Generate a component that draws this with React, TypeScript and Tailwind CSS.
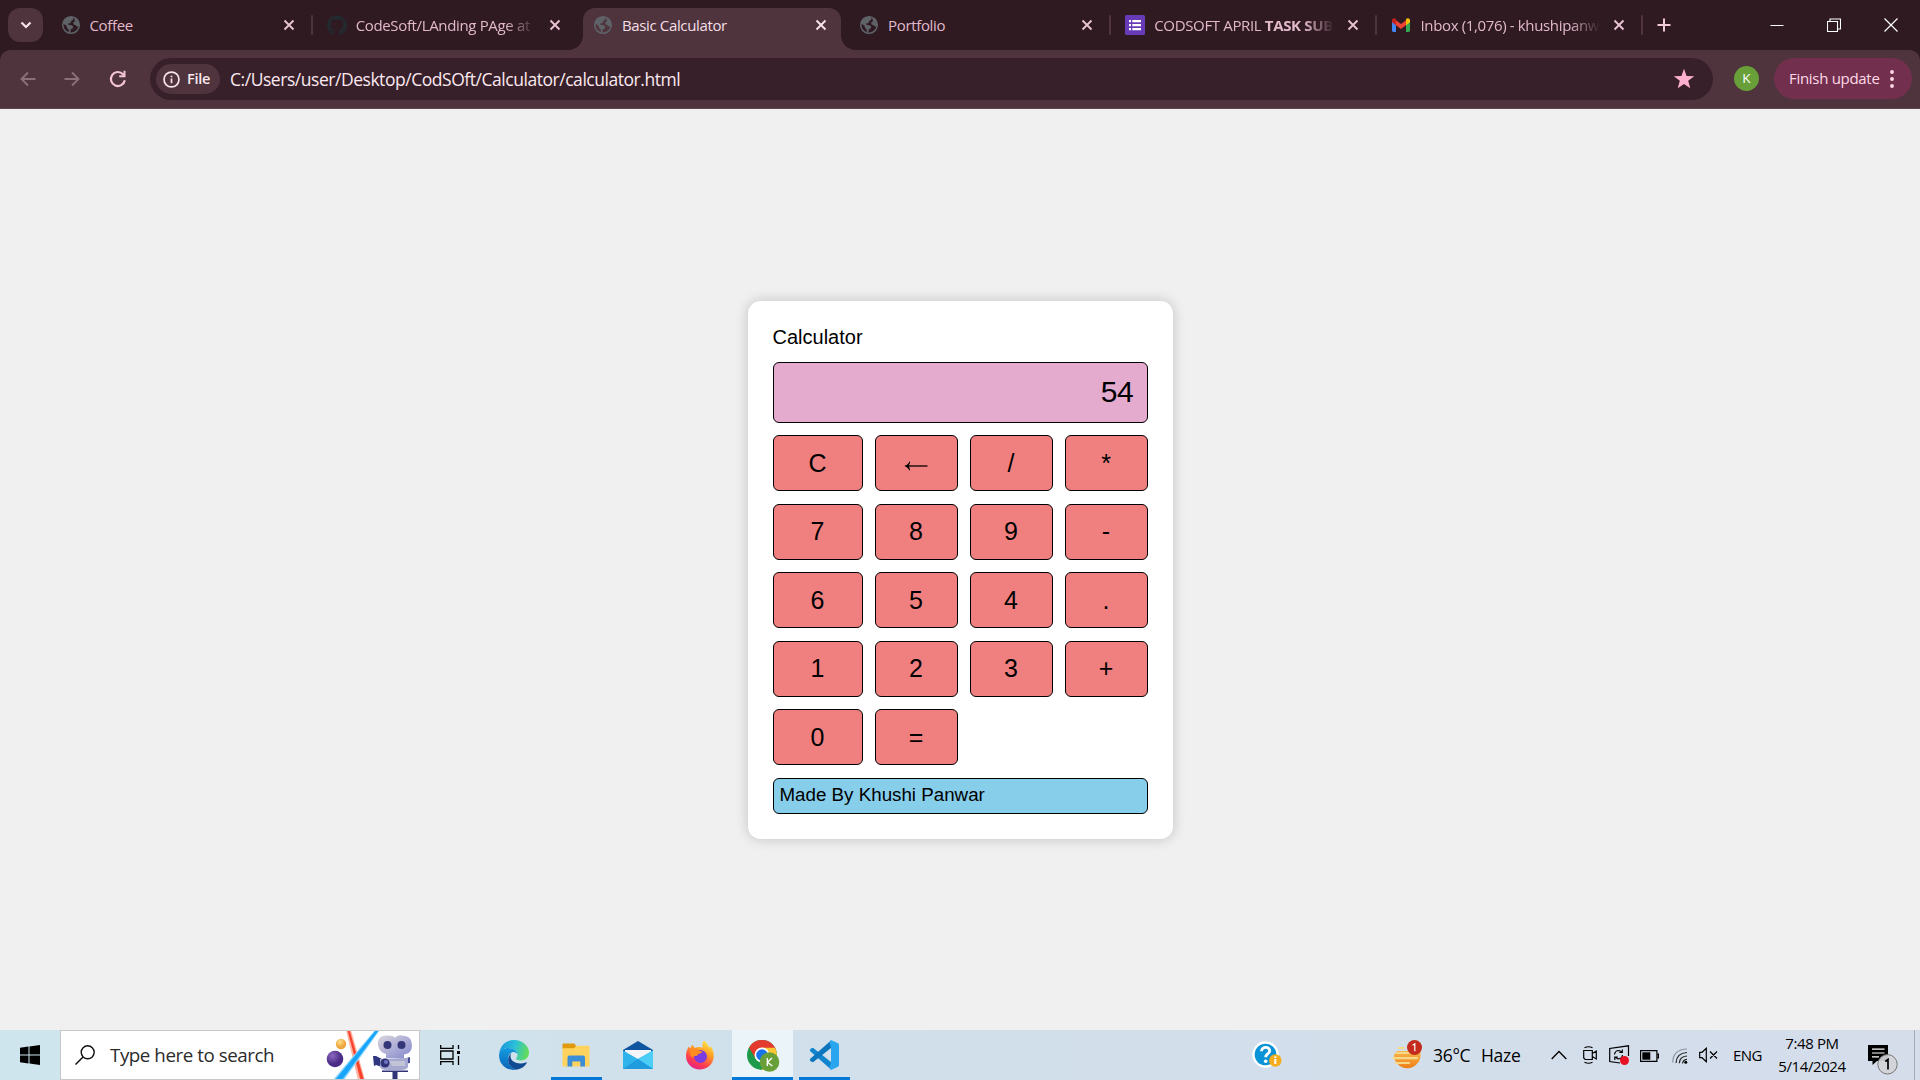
import type { ReactNode } from "react";
import { SiGithub } from "react-icons/si";

const ui = "font-['Open_Sans','Noto_Sans',sans-serif]";

function Globe() {
  return (
    <svg viewBox="0 0 20 20" className="h-[20px] w-[20px]">
      <circle cx="10" cy="10" r="8.3" fill="none" stroke="#5f6368" strokeWidth="1.5" />
      <path
        d="M2 8.5C3 4.5 6 1.7 10.5 1.8L12.5 2.6 12.3 4.6 10 6.2 9.6 8 7.2 8.4 7.6 9.9 10.6 10.2 12.2 11.6 11.6 13.4 9.8 14.2 9.3 17.6 7.9 17.9 7.6 14.6 5.8 12.4 5.6 10.8Z"
        fill="#5f6368"
      />
      <path d="M13.5 2.6C16.8 4 18.6 7.2 18.2 11L16.2 11.8 14.8 10.2 12.6 9.4 12.2 7.6 13.8 6.6Z" fill="#5f6368" />
    </svg>
  );
}

function FormsIcon() {
  return (
    <svg viewBox="0 0 20 20" className="h-5 w-5">
      <rect width="20" height="20" rx="1.5" fill="#673ab7" />
      <path d="M4 5h2v2.2H4zM7.3 5H16v2.2H7.3zM4 9h2v2.2H4zM7.3 9H16v2.2H7.3zM4 13h2v2.2H4zM7.3 13H16v2.2H7.3z" fill="#fff" />
    </svg>
  );
}

function GmailIcon() {
  return (
    <svg viewBox="0 0 20 20" className="h-5 w-5">
      <path d="M1 5v10.600Q1 17 2.300 17H5V8Z" fill="#4285f4" />
      <path d="M19 5v10.600Q19 17 17.700 17H15V8Z" fill="#34a853" />
      <path d="M5 5.200 10 9l5-3.800v5L10 14 5 10.200Z" fill="#ea4335" />
      <path d="M1 5.500C1 3.300 3.300 2.700 5 4v6.200L1 7.200Z" fill="#c5221f" />
      <path d="M19 5.500C19 3.300 16.700 2.700 15 4v6.200l4-3Z" fill="#fbbc04" />
    </svg>
  );
}

function CloseX({ color }: { color: string }) {
  return (
    <svg viewBox="0 0 12 12" className="h-3 w-3">
      <path d="M1.500 1.500 10.500 10.500M10.500 1.500 1.500 10.500" stroke={color} strokeWidth="1.9" fill="none" />
    </svg>
  );
}

type TabProps = {
  icon: ReactNode;
  title: ReactNode;
  active?: boolean;
  divider?: boolean;
  fade?: boolean;
};

function Tab({ icon, title, active, divider, fade }: TabProps) {
  return (
    <div className="flex h-[50px] w-[266.200px] shrink-0 items-end">
      <div
        className={
          active
            ? "relative flex h-[42px] w-[258px] items-center rounded-t-[12px] bg-[#4f343e] pb-[8px] text-[#f5dfe6]"
            : "relative flex h-[42px] w-[258px] items-center pb-[8px] text-[#e2b9c9]"
        }
      >
        {active && (
          <>
            <span className="absolute bottom-0 -left-[14px] h-[14px] w-[14px] bg-[radial-gradient(circle_at_0_0,transparent_13.500px,#4f343e_14px)]" />
            <span className="absolute -right-[14px] bottom-0 h-[14px] w-[14px] bg-[radial-gradient(circle_at_100%_0,transparent_13.500px,#4f343e_14px)]" />
          </>
        )}
        <span className="ml-[10px] flex w-[20px] shrink-0 justify-center">{icon}</span>
        <span
          className={
            fade
              ? "ml-[9px] w-[180px] shrink-0 text-[15px] leading-5 tracking-[-0.35px] whitespace-nowrap [mask-image:linear-gradient(to_right,#000_150px,transparent_180px)]"
              : "ml-[9px] w-[180px] shrink-0 text-[15px] leading-5 tracking-[-0.35px] whitespace-nowrap"
          }
        >
          {title}
        </span>
        <span className="ml-[13px]">
          <CloseX color={active ? "#f8e4ea" : "#e8c3d1"} />
        </span>
      </div>
      {divider && <span className="mb-[15px] ml-[2px] h-[20px] w-[2px] rounded bg-[#4f343e]" />}
    </div>
  );
}

function TabStrip() {
  return (
    <div className="flex h-[50px] bg-[#2f1a22]">
      <div className="mt-[8px] ml-[8px] flex h-[34px] w-[35px] shrink-0 items-center justify-center rounded-[12px] bg-[#4f343e]">
        <svg viewBox="0 0 12 8" className="h-[8px] w-[12px]">
          <path d="M1.500 1.500 6 6 10.500 1.500" fill="none" stroke="#f8e4ea" strokeWidth="2.200" />
        </svg>
      </div>
      <div className="ml-[7.500px] flex">
        <Tab icon={<Globe />} title="Coffee" divider />
        <Tab icon={<SiGithub size={20} color="#24292f" />} title="CodeSoft/LAnding PAge at" fade />
        <Tab icon={<Globe />} title="Basic Calculator" active />
        <Tab icon={<Globe />} title="Portfolio" divider />
        <Tab icon={<FormsIcon />} title={<>CODSOFT APRIL <b>TASK SUB</b></>} fade divider />
        <Tab icon={<GmailIcon />} title="Inbox (1,076) - khushipanw" fade divider />
      </div>
      <svg viewBox="0 0 14 14" className="mt-[18px] ml-[9px] h-[14px] w-[14px]">
        <path d="M7 .5v13M.5 7h13" stroke="#f0cad8" strokeWidth="2" />
      </svg>
      <div className="mt-[17px] mr-[22px] ml-auto flex h-[15px] items-center gap-[43px]">
        <svg viewBox="0 0 14 14" className="h-[14px] w-[14px]">
          <path d="M.5 7.500h13" stroke="#fff" />
        </svg>
        <svg viewBox="0 0 14 14" className="h-[14px] w-[14px]">
          <path d="M.5 3.500h10v10H.5zM3 3.500V1h10.500v10H11" fill="none" stroke="#fff" strokeWidth="1.100" />
        </svg>
        <svg viewBox="0 0 14 14" className="h-[14px] w-[14px]">
          <path d="M.5.5l13 13M13.500.5l-13 13" stroke="#fff" strokeWidth="1.200" />
        </svg>
      </div>
    </div>
  );
}

function Toolbar() {
  return (
    <div className="bg-[#2f1a22]">
      <div className="flex h-[59px] items-start rounded-t-[10px] border-b border-[#5e4650] bg-[#4f343e] pt-[8px]">
        <div className="flex h-[42px] w-[150px] items-center pl-[20px]">
          <svg viewBox="0 0 16 16" className="h-4 w-4">
            <path d="M15.500 8H1.500M8 1.500 1.500 8 8 14.500" fill="none" stroke="#8b6f79" strokeWidth="1.900" />
          </svg>
          <svg viewBox="0 0 16 16" className="ml-[28px] h-4 w-4">
            <path d="M.5 8h14M8 1.500 14.500 8 8 14.500" fill="none" stroke="#8b6f79" strokeWidth="1.900" />
          </svg>
          <svg viewBox="0 0 18 18" className="ml-[29px] h-[18px] w-[18px]">
            <path d="M15.800 10.200A7 7 0 1 1 14 4.200L15.500 5.800" fill="none" stroke="#f3c5d5" strokeWidth="2.200" />
            <path d="M16.500.8V7.200H10.200V5.200h4.300V.8Z" fill="#f3c5d5" />
          </svg>
        </div>
        <div className="flex h-[42px] w-[1563px] items-center rounded-full bg-[#38202a] pl-[6px]">
          <div className="flex h-[30px] w-[64px] items-center rounded-full bg-[#4f343e] pl-[7px]">
            <svg viewBox="0 0 18 18" className="h-[17px] w-[17px]">
              <circle cx="9" cy="9" r="7.900" fill="none" stroke="#f8e4ea" strokeWidth="1.800" />
              <path d="M8.100 7.900h1.800V13H8.100zM8.100 4.900h1.800v1.800H8.100z" fill="#f8e4ea" />
            </svg>
            <span className="ml-[7px] text-[14.500px] font-semibold tracking-[-0.300px] text-[#fbe9ef]">File</span>
          </div>
          <span className="ml-[10px] text-[17.500px] tracking-[-0.460px] whitespace-nowrap text-[#fbe9ef]">
            C:/Users/user/Desktop/CodSOft/Calculator/calculator.html
          </span>
          <svg viewBox="0 0 20 20" className="mr-[18px] ml-auto h-[22px] w-[22px]">
            <path d="M10 .6 12.300 7.300 19.300 7.400 13.800 11.700 15.700 18.500 10 14.500 4.300 18.500 6.200 11.700.7 7.400 7.700 7.300Z" fill="#ffb0d1" />
          </svg>
        </div>
        <div className="mt-[8px] ml-[21px] flex h-[25px] w-[25px] items-center justify-center rounded-full bg-[#689f38] text-[13.500px] text-white">K</div>
        <div className="ml-[15px] flex h-[41px] w-[138px] items-center rounded-full bg-[#72304e] pl-[15px] text-[#ffd9e6]">
          <span className="w-[101px] text-[15px] tracking-[-0.300px] whitespace-nowrap">Finish update</span>
          <svg viewBox="0 0 4 18" className="h-[18px] w-[4px]">
            <circle cx="2" cy="2" r="1.900" fill="#ffd9e6" />
            <circle cx="2" cy="9" r="1.900" fill="#ffd9e6" />
            <circle cx="2" cy="16" r="1.900" fill="#ffd9e6" />
          </svg>
        </div>
      </div>
    </div>
  );
}

const keys = ["C", "←", "/", "*", "7", "8", "9", "-", "6", "5", "4", ".", "1", "2", "3", "+", "0", "="];

function Calculator() {
  return (
    <div className="h-[538px] w-[425px] rounded-[12.500px] bg-white p-[25px] font-['Liberation_Sans',Arial,sans-serif] text-black shadow-[0_0_12.500px_rgba(0,0,0,0.2)]">
      <div className="h-[36px] text-[20px] leading-[22px]">Calculator</div>
      <div className="flex h-[61px] items-center justify-end rounded-[6px] border border-black bg-[#e4abcf] pr-[13px] pb-[3px] text-[30px] tracking-[-0.300px]">54</div>
      <div className="mt-[12px] grid grid-cols-[90px_83px_83px_83px] gap-x-[12px] gap-y-[12.500px]">
        {keys.map((k) => (
          <button key={k} className="flex h-[56px] items-center justify-center rounded-[6px] border border-black bg-[#f08080] text-[25px] leading-none">
            {k === "←" ? (
              <svg viewBox="0 0 24 12" className="mt-[6px] h-[12px] w-[24px]">
                <path d="M1.500 6H23.500" stroke="#000" strokeWidth="1.300" />
                <path d="M.5 6C3 5 4.500 3.500 5.500 1.500L6.200 1.900 4.800 6 6.200 10.100 5.500 10.500C4.500 8.500 3 7 .5 6Z" fill="#000" />
              </svg>
            ) : (
              k
            )}
          </button>
        ))}
      </div>
      <div className="mt-[13px] flex h-[36px] items-center rounded-[6px] border border-black bg-[#87ceeb] pb-px pl-[6px] text-[18.750px]">
        Made By Khushi Panwar
      </div>
    </div>
  );
}

function SearchArt() {
  return (
    <svg viewBox="0 0 90 48" className="h-[48px] w-[90px]">
      <defs>
        <linearGradient id="cam" x1="0" y1="0" x2="1" y2="1">
          <stop offset="0" stopColor="#dcd6dd" />
          <stop offset="1" stopColor="#8388cf" />
        </linearGradient>
        <radialGradient id="planet" cx=".35" cy=".3">
          <stop offset="0" stopColor="#8d69bf" />
          <stop offset="1" stopColor="#4a2c86" />
        </radialGradient>
        <radialGradient id="moon" cx=".4" cy=".3">
          <stop offset="0" stopColor="#ffe18c" />
          <stop offset="1" stopColor="#eda53e" />
        </radialGradient>
      </defs>
      <circle cx="16" cy="13" r="5.200" fill="url(#moon)" />
      <circle cx="10" cy="28" r="8.300" fill="url(#planet)" />
      <path d="M21 -1h5L40 49H33Z" fill="#ffb0a0" />
      <path d="M22.500 -1h2L39 49H35.500Z" fill="#f8432c" />
      <path d="M8 49 50 -1h5L19 49Z" fill="#8bd6fd" />
      <path d="M10 49 51 -1h3L17 49Z" fill="#16a5fa" />
      <path d="M48 25 51 25 57 28V36L51 34 49 35Z" fill="#30367f" />
      <path d="M78 28 85 26V32L78 33Z" fill="#454b99" />
      <path d="M53 14C52 6 58 4 63 4.500q5 0 7 2 3-3 7-2 10 0 10 10 0 8-8 9V27H61V23Q54 21 53 14Z" fill="url(#cam)" />
      <path d="M55 28 79 27H83V36Q82 39 76 39H62Q55 39 55 35Z" fill="#a5a8cf" />
      <path d="M64 30H80V35H67Z" fill="#c3c3d8" />
      <circle cx="62.500" cy="14" r="4" fill="#343678" />
      <circle cx="76.500" cy="14" r="4" fill="#343678" />
      <circle cx="60" cy="32" r="4.500" fill="#303277" />
      <circle cx="61" cy="31" r="2" fill="#7077bd" />
      <path d="M57 39.500H83V41H72.500V49H67.500V41H57Z" fill="#303277" />
    </svg>
  );
}

function EdgeIcon() {
  return (
    <svg viewBox="0 0 30 30" className="h-[30px] w-[30px]">
      <defs>
        <linearGradient id="edgeTop" x1="0" y1=".3" x2="1" y2=".5">
          <stop offset="0" stopColor="#1a94da" />
          <stop offset=".5" stopColor="#2bc0da" />
          <stop offset="1" stopColor="#65de55" />
        </linearGradient>
        <linearGradient id="edgeLow" x1="0" y1="0" x2="0" y2="1">
          <stop offset="0" stopColor="#139be0" />
          <stop offset="1" stopColor="#0b64b8" />
        </linearGradient>
      </defs>
      <path d="M.3 13.500C1 5.500 7.300 0 15 0c8.500 0 15 6 15 12.500 0 5-3.800 8-8 8-3.500 0-5.400-1.200-5-2.200 1-1 1.500-2 1.500-3.400C18.500 10.500 13 8 9 8 5 8 2 10 .3 13.500Z" fill="url(#edgeTop)" />
      <path d="M.1 14.500C1 10 5 8 9 8c5 0 9.500 3 9.500 6.800-.5-2-2.500-3-4.500-2.800C10.500 13 8.500 16 9 20c.5 4.500 3.500 8.500 8 9.800C8 31-.5 24.500.1 14.500Z" fill="url(#edgeLow)" />
      <path d="M12.500 12.700C7 17 8 26.500 17 29.800c4.500-.5 8.500-3 10.600-6.600.4-.7-.1-1.100-.8-.8C20 25 11 22.500 11.500 15.500q.2-1.600 1-2.800Z" fill="#104a93" />
    </svg>
  );
}

function ExplorerIcon() {
  return (
    <svg viewBox="0 0 28 24" className="h-[24px] w-[28px]">
      <path d="M.5 1.500Q.5.500 1.500.500H12.500L14 3V6H.5Z" fill="#e09a0b" />
      <path d="M.5 5.200H12L14.500 2.700H27.500V22.500Q27.500 23.500 26.500 23.500H.5Z" fill="#ffd35e" />
      <path d="M5.500 23.500V14.500Q5.500 12.500 7.500 12.500H21Q23 12.500 23 14.500V23.500H18.300V18.500H10.300V23.500Z" fill="#3c8ed8" />
    </svg>
  );
}

function MailIcon() {
  return (
    <svg viewBox="0 0 30 30" className="h-[30px] w-[30px]">
      <path d="M0 10 15 1 30 10V19H0Z" fill="#0f559f" />
      <path d="M2 10H28V20H2Z" fill="#f3f5fa" />
      <path d="M0 10.500 15 19 30 10.500V29H0Z" fill="#2eb4ea" />
      <path d="M15 19 30 10.500V29Z" fill="#4ccdf5" />
      <path d="M0 29 15 19 30 29Z" fill="#1f9bde" />
    </svg>
  );
}

function FirefoxIcon() {
  return (
    <svg viewBox="0 0 30 30" className="h-[30px] w-[30px]">
      <defs>
        <linearGradient id="fox" x1=".8" y1="0" x2=".3" y2="1">
          <stop offset="0" stopColor="#fff04a" />
          <stop offset=".4" stopColor="#ff9a26" />
          <stop offset=".75" stopColor="#ff3d4e" />
          <stop offset="1" stopColor="#e01e8c" />
        </linearGradient>
      </defs>
      <path d="M19 .5C22 3 23 5 24 7.500L26 6.500C29 11 29.500 16 28 20.500 26 26 21 29.500 15 29.500 7 29.500 1 23.500 1 16 1 12 2 9 4 6.500L5.500 8.500 7 4.500 10 8C13 6.500 16 7 17.500 8 17 5 17.500 2.500 19 .5Z" fill="url(#fox)" />
      <circle cx="15.500" cy="16.500" r="6.500" fill="#7a3be0" />
      <path d="M5 10C8 8 12 8 14 10.500L17.500 11.500C16.500 13.500 13.500 13.500 13 14.500 12 17 8 15 7.500 18 5.500 16 4.500 13 5 10Z" fill="#ff8c1e" />
    </svg>
  );
}

function ChromeIcon() {
  return (
    <svg viewBox="0 0 34 34" className="ml-[2px] h-[34px] w-[34px]">
      <circle cx="15" cy="15" r="15" fill="#1e9a4b" />
      <path d="M2 7.500A15 15 0 0 1 28 7.500L29 10H15L8.700 18.800Z" fill="#e33b2e" />
      <path d="M28 7.700A15 15 0 0 1 14.500 30L21.500 18.500 15 7.700Z" fill="#fcc934" />
      <circle cx="15" cy="15" r="7.500" fill="#fff" />
      <circle cx="15" cy="15" r="5.800" fill="#1a73e8" />
      <circle cx="22.500" cy="22" r="9.800" fill="#689f38" />
      <path d="M20.300 18v8M25 18l-4.500 4.300L25.300 26" fill="none" stroke="#fff" strokeWidth="1.300" />
    </svg>
  );
}

function CodeIcon() {
  return (
    <svg viewBox="0 0 30 30" className="h-[30px] w-[30px]">
      <path d="M2 8.500 4 7.800 22 22V29.500L1 11Q.2 9.700 2 8.500Z" fill="#1085cd" />
      <path d="M2 21.500 4 22.300 22 8V.5L1 19Q.2 20.300 2 21.500Z" fill="#0b76bd" />
      <path d="M22 0 29 3.200Q30 3.700 30 5V25Q30 26.300 29 26.800L22 30 20.500 28 22 22V8L20.500 2Z" fill="#2aa6f0" />
    </svg>
  );
}

function HelpIcon() {
  return (
    <svg viewBox="0 0 30 30" className="h-[30px] w-[30px]">
      <circle cx="13.500" cy="14.500" r="13.200" fill="#fff" />
      <circle cx="13.500" cy="14.500" r="10.800" fill="#0a93d6" />
      <path d="M9.500 11.300C9.700 6 18 6.200 17.700 11 17.500 13.800 13.700 13.700 13.700 17.300" fill="none" stroke="#fff" strokeWidth="2.900" />
      <circle cx="13.700" cy="21.300" r="1.800" fill="#fff" />
      <circle cx="23.300" cy="20.500" r="6.200" fill="#f5ad1d" />
      <path d="M22.300 19h2v5h-2zM22.300 16.300h2v1.800h-2z" fill="#fff" />
    </svg>
  );
}

function HazeIcon() {
  return (
    <svg viewBox="0 0 30 30" className="h-[30px] w-[30px]">
      <defs>
        <linearGradient id="sun" x1="0" y1="0" x2="0" y2="1">
          <stop offset="0" stopColor="#f8b84a" />
          <stop offset="1" stopColor="#ee7e16" />
        </linearGradient>
      </defs>
      <path d="M2 15a13 13 0 0 0 26.500 0V11H5Z" fill="url(#sun)" />
      <path d="M6.500 8H12M5 13H18M1.500 18.200H25M4 23H17" stroke="#f6d88a" strokeWidth="2.200" strokeLinecap="round" />
      <circle cx="22.500" cy="7.500" r="7.500" fill="#c42b1c" />
      <path d="M20.600 5.300 22.800 3.800V11.200" fill="none" stroke="#fff" strokeWidth="1.200" />
    </svg>
  );
}

function AppCell({ children, className }: { children: ReactNode; className: string }) {
  return <div className={`flex h-[50px] shrink-0 items-center justify-center ${className}`}>{children}</div>;
}

function Taskbar() {
  return (
    <div className="flex h-[50px] bg-linear-to-r from-[#cfe5ed] via-[#d1dfeb] to-[#d5ddeb] text-black">
      <AppCell className="w-[60px]">
        <svg viewBox="0 0 20 20" className="h-5 w-5">
          <path d="M0 2.800 8.500 1.600V9.500H0ZM9.500 1.500 20 0V9.500H9.500ZM0 10.500H8.500V18.400L0 17.200ZM9.500 10.500H20V20L9.500 18.500Z" />
        </svg>
      </AppCell>
      <div className="flex h-[50px] w-[360px] shrink-0 items-center border border-[#c8c8c8] bg-white">
        <svg viewBox="0 0 20 20" className="ml-[14px] h-5 w-5">
          <circle cx="12.700" cy="7.300" r="6.500" fill="none" stroke="#111" strokeWidth="1.400" />
          <path d="M8 12 .5 19.500" stroke="#111" strokeWidth="1.500" />
        </svg>
        <span className="ml-[15px] w-[154px] text-[18.750px] tracking-[-0.450px] whitespace-nowrap text-[#2b2b2b]">Type here to search</span>
        <div className="ml-[61px]">
          <SearchArt />
        </div>
      </div>
      <AppCell className="w-[60px]">
        <svg viewBox="0 0 20 20" className="h-5 w-5">
          <path d="M.7 0V3.300H13V0M.7 20V16.700H13V20M.7 6H13V14H.7ZM18.500 0V4M18.500 11V20" fill="none" stroke="#000" strokeWidth="1.300" />
          <path d="M17 6h3v3h-3z" />
        </svg>
      </AppCell>
      <AppCell className="ml-[4px] w-[60px]"><EdgeIcon /></AppCell>
      <div className="ml-[7px] flex h-[50px] w-[51px] flex-col items-center justify-between pt-[13px]">
        <div className="-ml-[2px]"><ExplorerIcon /></div>
        <div className="h-[3px] w-full bg-[#0078d7]" />
      </div>
      <AppCell className="ml-[6px] w-[60px]"><MailIcon /></AppCell>
      <AppCell className="ml-[2px] w-[60px]"><FirefoxIcon /></AppCell>
      <div className="ml-[2px] flex h-[50px] w-[61px] flex-col items-center justify-between bg-[#ebf4f8] pt-[10px]">
        <ChromeIcon />
        <div className="h-[3px] w-full bg-[#0078d7]" />
      </div>
      <div className="ml-[6px] flex h-[50px] w-[51px] flex-col items-center justify-between pt-[10px]">
        <div className="-ml-[2px]"><CodeIcon /></div>
        <div className="h-[3px] w-full bg-[#0078d7]" />
      </div>
      <AppCell className="ml-[402px] w-[30px]"><HelpIcon /></AppCell>
      <AppCell className="ml-[110px] w-[30px]"><HazeIcon /></AppCell>
      <span className="ml-[11px] w-[48px] shrink-0 self-center text-[17.500px] tracking-[-0.300px] whitespace-nowrap">36°C</span>
      <span className="w-[70px] shrink-0 self-center text-[17.500px] tracking-[-0.300px]">Haze</span>
      <svg viewBox="0 0 16 10" className="h-[10px] w-[16px] shrink-0 self-center">
        <path d="M.7 9 8 1.500 15.300 9" fill="none" stroke="#000" strokeWidth="1.300" />
      </svg>
      <svg viewBox="0 0 14 18" className="ml-[16px] h-[18px] w-[14px] shrink-0 self-center">
        <path d="M.7 4.500H9.300V13.500H2.200L.7 12ZM9.300 7.500 13.300 5V13L9.300 10.500M1.500 1.800Q5.500 -.3 9.500 1.800M1.500 16.200Q5.500 18.300 9.500 16.200" fill="none" stroke="#000" strokeWidth="1.200" />
      </svg>
      <svg viewBox="0 0 21 20" className="ml-[12px] h-[20px] w-[21px] shrink-0 self-center">
        <path d="M11 18 .7 16.500V3.500L19.500.8V11" fill="none" stroke="#000" strokeWidth="1.200" />
        <path d="M5.500 9.500Q6 5.500 10 5.500L13 7M13.300 4.500V7.500H10.300M13.500 10Q13 14 9 13.800L6.300 12.300M5.800 15V12H8.800" fill="none" stroke="#000" strokeWidth="1.200" />
        <circle cx="15.500" cy="15.500" r="4.500" fill="#e81123" />
      </svg>
      <svg viewBox="0 0 19 12" className="mt-[1px] ml-[10px] h-[12px] w-[19px] shrink-0 self-center">
        <path d="M.6.6H16.900V11.400H.6ZM16.900 4H18.400V8H16.900" fill="none" stroke="#000" strokeWidth="1.200" />
        <path d="M2.300 2.300h8v7.400h-8z" />
      </svg>
      <svg viewBox="0 0 16 16" className="mt-[2px] ml-[13px] h-[16px] w-[16px] shrink-0 self-center">
        <path d="M.7 14.500Q1 1.500 15 1" fill="none" stroke="#8d95a0" strokeWidth="1.200" />
        <path d="M4 15Q4.500 5 15 4.500M7.300 15.300Q7.500 8.500 15 8M10.500 15.500Q11 11.500 15 11.300" fill="none" stroke="#222" strokeWidth="1.200" />
        <circle cx="13.800" cy="14.300" r="1.500" />
      </svg>
      <svg viewBox="0 0 20 16" className="ml-[11px] h-[16px] w-[20px] shrink-0 self-center">
        <path d="M.7 5.300H3L7.300 1.300V14.700L3 10.700H.7ZM11 4.500 18 11.500M18 4.500 11 11.500" fill="none" stroke="#000" strokeWidth="1.200" />
      </svg>
      <span className="ml-[14px] w-[43px] shrink-0 self-center text-[15px] tracking-[-0.600px]">ENG</span>
      <div className="flex w-[72px] shrink-0 flex-col items-center pt-[2px] text-[15px] leading-[23px] tracking-[-0.400px] whitespace-nowrap">
        <span>7:48 PM</span>
        <span>5/14/2024</span>
      </div>
      <svg viewBox="0 0 32 32" className="mt-[14px] ml-[20px] h-[32px] w-[32px] shrink-0">
        <path d="M0 1H20V17H9L4.500 21V17H0Z" />
        <path d="M4 5.200H16.500M4 9H16.500M4 12.800H11" stroke="#fff" strokeWidth="1.200" />
        <circle cx="19.500" cy="20.300" r="9.700" fill="#d2d3d8" fillOpacity=".93" stroke="#777" />
        <path d="M17.300 17.500 20 15.500V25.500" fill="none" stroke="#000" strokeWidth="1.700" />
      </svg>
      <div className="mr-[5px] ml-auto h-[50px] w-px bg-[#a3abb8]" />
    </div>
  );
}

export default function App() {
  return (
    <div className={`flex h-[1080px] w-[1920px] flex-col overflow-hidden bg-[#f0f0f0] ${ui}`}>
      <TabStrip />
      <Toolbar />
      <main className="flex h-[921px] items-start justify-center pt-[192px]">
        <Calculator />
      </main>
      <Taskbar />
    </div>
  );
}
